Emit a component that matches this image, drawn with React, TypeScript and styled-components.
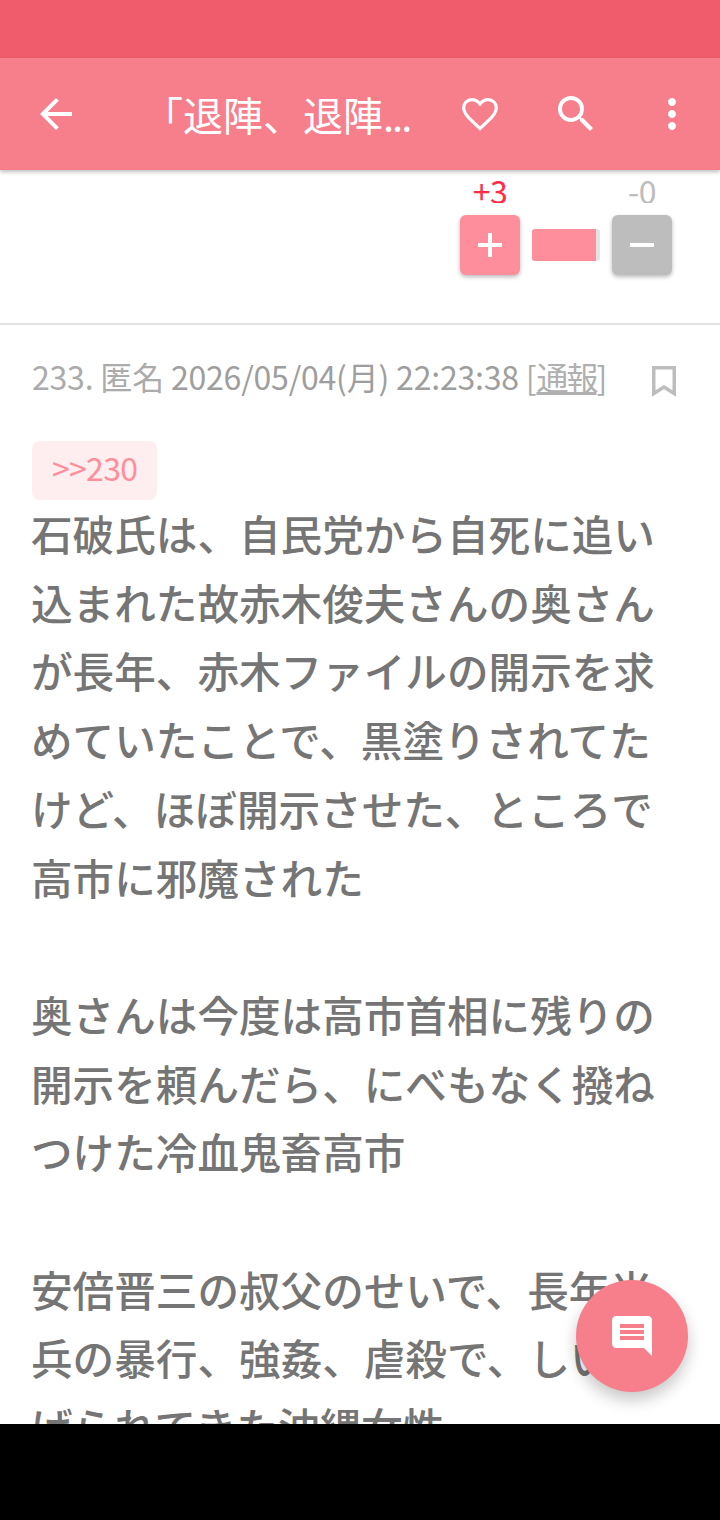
import React from "react";
import styled, { createGlobalStyle } from "styled-components";
import { MdArrowBack, MdInsertComment, MdMoreVert, MdSearch } from "react-icons/md";

const CJK = `"Noto Sans CJK JP", "Noto Sans", sans-serif`;

const GlobalStyle = createGlobalStyle`
  html, body {
    margin: 0;
    padding: 0;
    background: #000;
  }
  * {
    box-sizing: border-box;
  }
`;

const Screen = styled.div`
  position: relative;
  width: 720px;
  height: 1424px;
  background: #fff;
  overflow: hidden;
  font-family: ${CJK};
`;

const NavSpacer = styled.div`
  height: 96px;
  background: #000;
`;

const StatusBar = styled.div`
  height: 58px;
  background: #f05c6c;
`;

const Toolbar = styled.header`
  position: relative;
  height: 112px;
  background: #f67f8b;
  box-shadow: 0 2px 4px rgba(0, 0, 0, 0.25);
  display: flex;
  align-items: center;
  color: #fff;
  z-index: 2;
`;

const IconSlot = styled.div<{ $width: number }>`
  width: ${(p) => p.$width}px;
  height: 112px;
  flex: none;
  display: flex;
  align-items: center;
  justify-content: center;
`;

const Title = styled.div`
  flex: 1;
  min-width: 0;
  padding-left: 31px;
  font-size: 40px;
  line-height: 112px;
  white-space: nowrap;
`;

const Dots = styled.span`
  letter-spacing: -2px;
`;

const VoteArea = styled.section`
  height: 155px;
  border-bottom: 2px solid #e2e2e2;
  padding: 0 48px 0 0;
  display: flex;
  justify-content: flex-end;
  gap: 12px;
`;

const VoteColumn = styled.div`
  width: 60px;
  display: flex;
  flex-direction: column;
  align-items: center;
`;

const VoteCount = styled.div<{ $color: string }>`
  height: 33px;
  margin-bottom: 12px;
  overflow: hidden;
  font-size: 32px;
  line-height: 40px;
  letter-spacing: -0.5px;
  color: ${(p) => p.$color};
`;

const VoteButton = styled.div<{ $color: string }>`
  width: 60px;
  height: 60px;
  border-radius: 6px;
  background: ${(p) => p.$color};
  box-shadow: 0 2px 4px rgba(0, 0, 0, 0.28);
  display: flex;
  align-items: center;
  justify-content: center;
`;

const VoteMeter = styled.div`
  width: 68px;
  height: 32px;
  margin-top: 59px;
  border-radius: 3px;
  background: #e4e4e4;
  overflow: hidden;
`;

const VoteMeterFill = styled.div`
  height: 100%;
  background: #ff8e9c;
`;

const Post = styled.article`
  padding: 0 32px;
`;

const MetaRow = styled.div`
  height: 116px;
  padding-top: 27px;
  display: flex;
  justify-content: space-between;
  align-items: flex-start;
`;

const Meta = styled.div`
  font-size: 32px;
  line-height: 48px;
  letter-spacing: -0.2px;
  color: #ababab;
  white-space: nowrap;
`;

const Stamp = styled.span`
  color: #9e9e9e;
`;

const Report = styled.span`
  color: #b0b0b0;
  letter-spacing: -2px;
  text-decoration: underline;
`;

const BookmarkSlot = styled.div`
  margin: 14px 12px 0 0;
  display: flex;
`;

const Anchor = styled.div`
  display: inline-block;
  height: 59px;
  padding: 0 20px;
  border-radius: 8px;
  background: #ffeef0;
  color: #ff8e9c;
  font-size: 32px;
  line-height: 53px;
  letter-spacing: -0.7px;
`;

const Body = styled.div`
  width: 640px;
  margin: -1px 0 0 -1px;
  font-size: 41.6px;
  font-weight: 500;
  line-height: 68.7px;
  color: #757575;
`;

const Fab = styled.div`
  position: absolute;
  left: 576px;
  top: 1280px;
  width: 112px;
  height: 112px;
  border-radius: 50%;
  background: #f67f8b;
  box-shadow: 0 8px 16px rgba(0, 0, 0, 0.22);
  display: flex;
  align-items: center;
  justify-content: center;
  color: #fff;
`;

const HeartIcon = () => (
  <svg width="36" height="33" viewBox="0 0 36 33" fill="none" stroke="#fff" strokeWidth="3.2">
    <path d="M18 30.500 L15.800 28.400 C7.500 20.800 1.700 15.600 1.700 9.800 C1.700 5 5.500 1.700 10 1.700 C12.800 1.700 15.800 3.200 18 6 C20.200 3.200 23.200 1.700 26 1.700 C30.500 1.700 34.300 5 34.300 9.800 C34.300 15.600 28.500 20.800 20.200 28.400 Z" />
  </svg>
);

const BookmarkIcon = () => (
  <svg width="24" height="31" viewBox="0 0 24 31" fill="none" stroke="#bdbdbd" strokeWidth="3.500">
    <path d="M1.750 1.750 H22.250 V27.500 L12 21 L1.750 27.500 Z" />
  </svg>
);

const PlusMark = () => (
  <svg width="24" height="24" viewBox="0 0 24 24" fill="#fff">
    <rect x="0" y="10" width="24" height="4" />
    <rect x="10" y="0" width="4" height="24" />
  </svg>
);

const MinusMark = () => (
  <svg width="24" height="4" viewBox="0 0 24 4" fill="#fff">
    <rect width="24" height="4" />
  </svg>
);

const paragraphs = [
  "石破氏は、自民党から自死に追い込まれた故赤木俊夫さんの奥さんが長年、赤木ファイルの開示を求めていたことで、黒塗りされてたけど、ほぼ開示させた、ところで高市に邪魔された",
  "奥さんは今度は高市首相に残りの開示を頼んだら、にべもなく撥ねつけた冷血鬼畜高市",
  "安倍晋三の叔父のせいで、長年米兵の暴行、強姦、虐殺で、しいたげられてきた沖縄女性",
];

const App: React.FC = () => {
  return (
    <>
      <GlobalStyle />
      <Screen>
        <StatusBar />
        <Toolbar>
          <IconSlot $width={112}>
            <MdArrowBack size={48} />
          </IconSlot>
          <Title>
            「退陣、退陣<Dots>...</Dots>
          </Title>
          <IconSlot $width={96}>
            <HeartIcon />
          </IconSlot>
          <IconSlot $width={96}>
            <MdSearch size={48} />
          </IconSlot>
          <IconSlot $width={96}>
            <MdMoreVert size={48} />
          </IconSlot>
        </Toolbar>
        <VoteArea>
          <VoteColumn>
            <VoteCount $color="#ff2d46">+3</VoteCount>
            <VoteButton $color="#ff8e9c">
              <PlusMark />
            </VoteButton>
          </VoteColumn>
          <VoteMeter>
            <VoteMeterFill style={{ width: `${(3 / 3.2) * 100}%` }} />
          </VoteMeter>
          <VoteColumn>
            <VoteCount $color="#bdbdbd">-0</VoteCount>
            <VoteButton $color="#bdbdbd">
              <MinusMark />
            </VoteButton>
          </VoteColumn>
        </VoteArea>
        <Post>
          <MetaRow>
            <Meta>
              233. 匿名 <Stamp>2026/05/04(月) 22:23:38</Stamp> [<Report>通報</Report>]
            </Meta>
            <BookmarkSlot>
              <BookmarkIcon />
            </BookmarkSlot>
          </MetaRow>
          <Anchor>&gt;&gt;230</Anchor>
          <Body>
            {paragraphs.map((text, i) => (
              <React.Fragment key={i}>
                {i > 0 && (
                  <>
                    <br />
                    <br />
                  </>
                )}
                {text}
              </React.Fragment>
            ))}
          </Body>
        </Post>
        <Fab>
          <MdInsertComment size={48} />
        </Fab>
      </Screen>
      <NavSpacer />
    </>
  );
};

export default App;
